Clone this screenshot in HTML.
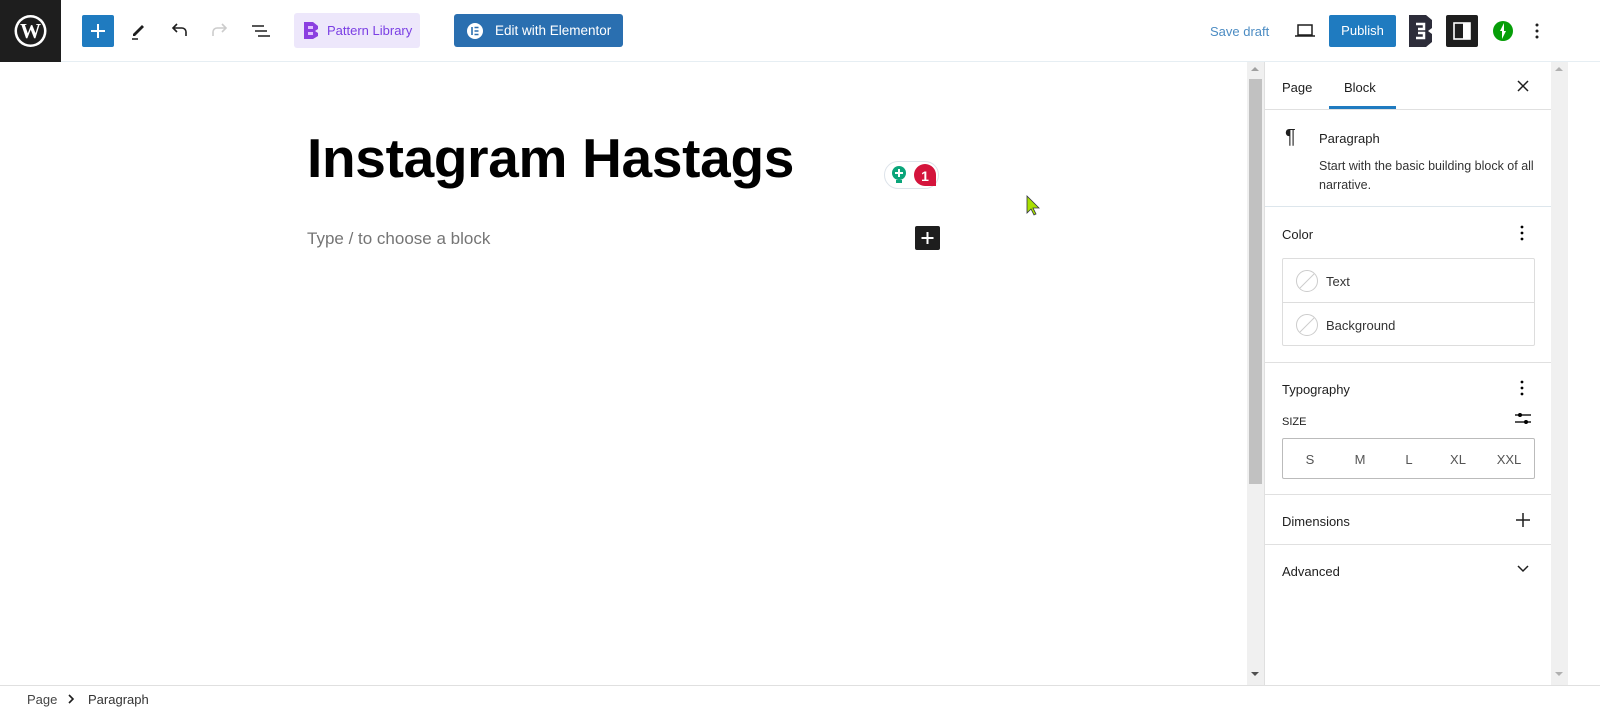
<!DOCTYPE html>
<html><head><meta charset="utf-8"><style>
*{box-sizing:border-box;margin:0;padding:0}
body{width:1600px;height:724px;overflow:hidden;background:#fff;font-family:"Liberation Sans",sans-serif;color:#1e1e1e;position:relative}
.abs{position:absolute}
.top{left:0;top:0;width:1600px;height:62px;border-bottom:1px solid #e6eef3;background:#fff}
.wp{left:0;top:0;width:61px;height:62px;background:#1e1e1e}
.btn-plus{left:82px;top:15px;width:32px;height:32px;background:#1f7bc0;border-radius:2px}
.pl{left:294px;top:13px;width:126px;height:35px;background:#ede7fb;border-radius:3px;color:#7b3fe4;font-size:13px}
.el{left:454px;top:14px;width:169px;height:33px;background:#2a6fb0;border-radius:3px;color:#fff;font-size:13.5px}
.pub{left:1329px;top:15px;width:67px;height:32px;background:#1f7bc0;border-radius:2px;color:#fff;font-size:13px;text-align:center;line-height:32px}
.side{left:1264px;top:62px;width:287px;height:623px;border-left:1px solid #e0e0e0;background:#fff}
.sb{background:#f0f0f0}
.lbl{font-size:13px}
.sec{position:absolute;left:0;width:286px;border-top:1px solid #e0e0e0}
</style></head><body>
<div class="abs top"></div>
<div class="abs wp"><svg width="61" height="62"><circle cx="30.5" cy="31" r="16" fill="#fff"/><circle cx="30.5" cy="31" r="13.5" fill="#1e1e1e"/><text x="30.5" y="38" text-anchor="middle" font-family="Liberation Serif" font-weight="bold" font-size="21" fill="#fff">W</text></svg></div>
<div class="abs btn-plus"><svg width="32" height="32"><path d="M16 9v14M9 16h14" stroke="#fff" stroke-width="2"/></svg></div>
<svg class="abs" style="left:128px;top:20px" width="22" height="22"><path d="M5 14l9-9 2 2-9 9H5z" fill="#1e1e1e"/><path d="M4 19h6" stroke="#1e1e1e" stroke-width="1.5"/></svg>
<svg class="abs" style="left:168px;top:20px" width="22" height="22"><path d="M6 8h8a4 4 0 0 1 4 4v4" stroke="#1e1e1e" stroke-width="1.6" fill="none"/><path d="M9 4L5 8l4 4" stroke="#1e1e1e" stroke-width="1.6" fill="none"/></svg>
<svg class="abs" style="left:209px;top:20px" width="22" height="22"><path d="M16 8H8a4 4 0 0 0-4 4v4" stroke="#ccc" stroke-width="1.6" fill="none"/><path d="M13 4l4 4-4 4" stroke="#ccc" stroke-width="1.6" fill="none"/></svg>
<svg class="abs" style="left:249px;top:20px" width="24" height="22"><path d="M3 6h12M6 11h12M9 16h12" stroke="#1e1e1e" stroke-width="1.6"/></svg>
<div class="abs pl"><svg class="abs" style="left:10px;top:9px" width="14" height="17"><path d="M0 0h9l5 4v3l-3 2 3 2v3l-5 3H0z" fill="#8b3fe0"/><path d="M4 4h5v3H4zM4 10h5v3H4z" fill="#e0c0ff"/></svg><span class="abs" style="left:33px;top:10px">Pattern Library</span></div>
<div class="abs el"><svg class="abs" style="left:12px;top:8px" width="18" height="18"><circle cx="9" cy="9" r="8" fill="#fff"/><path d="M6 5v8" stroke="#2a6fb0" stroke-width="1.6"/><path d="M8.5 5.5h4M8.5 9h4M8.5 12.5h4" stroke="#2a6fb0" stroke-width="1.4"/></svg><span class="abs" style="left:41px;top:9px">Edit with Elementor</span></div>
<div class="abs" style="left:1210px;top:24px;font-size:13px;color:#4c8cc3">Save draft</div>
<svg class="abs" style="left:1294px;top:21px" width="22" height="20"><rect x="4" y="4" width="14" height="10" fill="none" stroke="#1e1e1e" stroke-width="1.5"/><path d="M1 15h20" stroke="#1e1e1e" stroke-width="1.5"/></svg>
<div class="abs pub">Publish</div>
<svg class="abs" style="left:1409px;top:15px" width="24" height="32"><path d="M0 0h17l6 5v8l-4 3 4 3v8l-6 5H0z" fill="#2d2d3a"/><path d="M7 9h8v5H9M9 18h6v5H7" stroke="#fff" stroke-width="2.5" fill="none"/></svg>
<div class="abs" style="left:1446px;top:15px;width:32px;height:32px;background:#1e1e1e;border-radius:2px"><svg width="32" height="32"><rect x="8" y="8" width="16" height="16" fill="none" stroke="#fff" stroke-width="1.6"/><rect x="17" y="8" width="7" height="16" fill="#fff"/></svg></div>
<svg class="abs" style="left:1492px;top:20px" width="22" height="22"><circle cx="11" cy="11" r="10" fill="#069e08"/><path d="M12 3v8h-4zM10 19v-8h4z" fill="#fff"/></svg>
<svg class="abs" style="left:1534px;top:21px" width="6" height="20"><circle cx="3" cy="4" r="1.5" fill="#1e1e1e"/><circle cx="3" cy="10" r="1.5" fill="#1e1e1e"/><circle cx="3" cy="16" r="1.5" fill="#1e1e1e"/></svg>

<div class="abs" style="left:307px;top:126px;font-size:55px;font-weight:700;letter-spacing:-0.3px;color:#000">Instagram Hastags</div>
<div class="abs" style="left:307px;top:229px;font-size:17px;color:#757575">Type / to choose a block</div>
<div class="abs" style="left:884px;top:161px;width:55px;height:28px;border:1px solid #dde3ea;border-radius:14px;background:#fff"></div>
<svg class="abs" style="left:890px;top:165px" width="20" height="22"><circle cx="9" cy="8" r="7" fill="#0aa57a"/><path d="M6 15h6v3H6z" fill="#0aa57a"/><path d="M9 4v8M5 8h8" stroke="#fff" stroke-width="2"/></svg>
<svg class="abs" style="left:912px;top:163px" width="26" height="25"><path d="M13 1a11 11 0 0 1 11 11v11H13A11 11 0 0 1 13 1z" fill="#d4143c"/><text x="13" y="18" text-anchor="middle" font-size="14" font-weight="bold" fill="#fff" font-family="Liberation Sans">1</text></svg>
<div class="abs" style="left:915px;top:226px;width:25px;height:24px;background:#1e1e1e;border-radius:2px"><svg width="25" height="24"><path d="M12.5 6v12M6.5 12h12" stroke="#fff" stroke-width="2"/></svg></div>
<svg class="abs" style="left:1025px;top:194px" width="16" height="22"><path d="M2 2l12 12h-6l3 6-2 1-3-6-4 4z" fill="#a8e000" stroke="#334" stroke-width=".8"/></svg>

<div class="abs sb" style="left:1247px;top:62px;width:17px;height:623px"></div>
<div class="abs" style="left:1249px;top:79px;width:13px;height:405px;background:#c1c1c1"></div>
<div class="abs" style="left:1251px;top:67px;width:0;height:0;border:4px solid transparent;border-bottom-color:#a0a0a0;border-top:0"></div>
<div class="abs" style="left:1251px;top:672px;width:0;height:0;border:4px solid transparent;border-top-color:#505050;border-bottom:0"></div>

<div class="abs side">
  <div class="abs lbl" style="left:17px;top:18px">Page</div>
  <div class="abs lbl" style="left:79px;top:18px">Block</div>
  <div class="abs" style="left:64px;top:44px;width:67px;height:3px;background:#1f7bc0"></div>
  <svg class="abs" style="left:251px;top:17px" width="14" height="14"><path d="M2 2l10 10M12 2L2 12" stroke="#1e1e1e" stroke-width="1.5"/></svg>
  <div class="sec" style="top:47px"></div>
  <div class="abs" style="left:20px;top:64px;font-size:20px">¶</div>
  <div class="abs lbl" style="left:54px;top:69px">Paragraph</div>
  <div class="abs" style="left:54px;top:95px;font-size:12.5px;line-height:19px;color:#333;width:225px">Start with the basic building block of all narrative.</div>
  <div class="sec" style="top:144px;border-color:#dde6ec"></div>
  <div class="abs lbl" style="left:17px;top:165px">Color</div>
  <svg class="abs" style="left:254px;top:162px" width="6" height="18"><circle cx="3" cy="3" r="1.4"/><circle cx="3" cy="9" r="1.4"/><circle cx="3" cy="15" r="1.4"/></svg>
  <div class="abs" style="left:17px;top:196px;width:253px;height:88px;border:1px solid #ddd;border-radius:2px"><div class="abs" style="left:0;top:43px;width:251px;border-top:1px solid #ddd"></div></div>
  <svg class="abs" style="left:30px;top:207px" width="24" height="24"><circle cx="12" cy="12" r="10.5" fill="none" stroke="#ccc"/><path d="M5 19L19 5" stroke="#ccc"/></svg>
  <div class="abs lbl" style="left:61px;top:212px;color:#333">Text</div>
  <svg class="abs" style="left:30px;top:251px" width="24" height="24"><circle cx="12" cy="12" r="10.5" fill="none" stroke="#ccc"/><path d="M5 19L19 5" stroke="#ccc"/></svg>
  <div class="abs lbl" style="left:61px;top:256px;color:#333">Background</div>
  <div class="sec" style="top:300px"></div>
  <div class="abs lbl" style="left:17px;top:320px">Typography</div>
  <svg class="abs" style="left:254px;top:317px" width="6" height="18"><circle cx="3" cy="3" r="1.4"/><circle cx="3" cy="9" r="1.4"/><circle cx="3" cy="15" r="1.4"/></svg>
  <div class="abs" style="left:17px;top:354px;font-size:11px">SIZE</div>
  <svg class="abs" style="left:249px;top:349px" width="18" height="16"><path d="M1 4h16M1 11h16" stroke="#1e1e1e" stroke-width="1.4"/><circle cx="6" cy="4" r="2"/><circle cx="12" cy="11" r="2"/></svg>
  <div class="abs" style="left:17px;top:376px;width:253px;height:41px;border:1px solid #bbb;border-radius:2px;font-size:13px;color:#555">
    <span class="abs" style="left:12px;top:13px;width:30px;text-align:center">S</span>
    <span class="abs" style="left:62px;top:13px;width:30px;text-align:center">M</span>
    <span class="abs" style="left:111px;top:13px;width:30px;text-align:center">L</span>
    <span class="abs" style="left:160px;top:13px;width:30px;text-align:center">XL</span>
    <span class="abs" style="left:208px;top:13px;width:36px;text-align:center">XXL</span>
  </div>
  <div class="sec" style="top:432px"></div>
  <div class="abs lbl" style="left:17px;top:452px">Dimensions</div>
  <svg class="abs" style="left:250px;top:450px" width="16" height="16"><path d="M8 1v14M1 8h14" stroke="#1e1e1e" stroke-width="1.5"/></svg>
  <div class="sec" style="top:482px"></div>
  <div class="abs lbl" style="left:17px;top:502px">Advanced</div>
  <svg class="abs" style="left:251px;top:502px" width="14" height="10"><path d="M2 2l5 5 5-5" stroke="#1e1e1e" stroke-width="1.5" fill="none"/></svg>
</div>
<div class="abs sb" style="left:1551px;top:62px;width:17px;height:623px"></div>
<div class="abs" style="left:1555px;top:67px;width:0;height:0;border:4px solid transparent;border-bottom-color:#b0b0b0;border-top:0"></div>
<div class="abs" style="left:1555px;top:672px;width:0;height:0;border:4px solid transparent;border-top-color:#b0b0b0;border-bottom:0"></div>

<div class="abs" style="left:0;top:685px;width:1600px;border-top:1px solid #e0e0e0"></div>
<div class="abs lbl" style="left:27px;top:692px;color:#444">Page</div>
<svg class="abs" style="left:66px;top:693px" width="10" height="12"><path d="M3 2l4 4-4 4" stroke="#1e1e1e" stroke-width="1.6" fill="none"/></svg>
<div class="abs lbl" style="left:88px;top:692px;color:#333">Paragraph</div>
</body></html>
